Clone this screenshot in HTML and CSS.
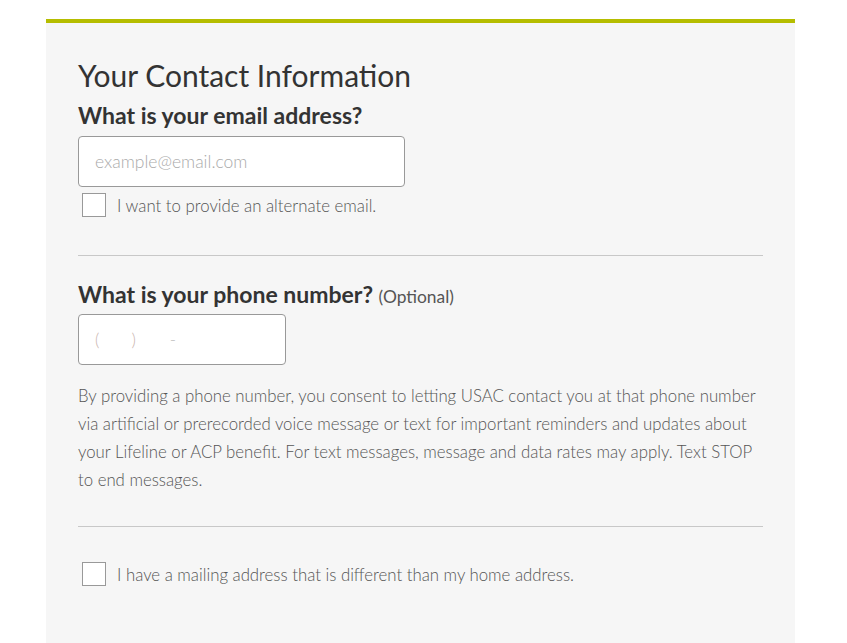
FILE: index.html
```html
<!DOCTYPE html>
<html lang="en">
<head>
    <meta charset="UTF-8">
    <meta name="viewport" content="width=device-width, initial-scale=1.0">
    <title>Your Contact Information</title>
    <link rel="stylesheet" href="styles.css">
</head>
<body>
    <div class="card">
        <h1>Your Contact Information</h1>

        <section class="field email-field">
            <label class="question" for="email">What is your email address?</label>
            <input type="text" id="email" class="text-input email-input" placeholder="example@email.com">
            <label class="check">
                <span class="box"></span>
                <span class="check-label">I want to provide an alternate email.</span>
            </label>
        </section>

        <hr class="divider">

        <section class="field phone-field">
            <label class="question" for="phone">What is your phone number? <span class="optional">(Optional)</span></label>
            <div class="text-input phone-input">
                <span class="mask">(</span>
                <span class="mask gap">)</span>
                <span class="mask dash">-</span>
            </div>
            <p class="consent">By providing a phone number, you consent to letting USAC contact you at that phone number via artificial or prerecorded voice message or text for important reminders and updates about your Lifeline or ACP benefit. For text messages, message and data rates may apply. Text STOP to end messages.</p>
        </section>

        <hr class="divider">

        <label class="check mailing">
            <span class="box"></span>
            <span class="check-label">I have a mailing address that is different than my home address.</span>
        </label>
    </div>
</body>
</html>
```

FILE: styles.css
```css
body {
    margin: 0;
    padding: 0;
    background: #fff;
    font-family: 'Lato', sans-serif;
    color: #333;
}

.card {
    width: 685px;
    margin: 19px 0 0 46px;
    padding: 33px 32px 50px;
    min-height: 550px;
    background: #f6f6f6;
    border-top: 4px solid #b5bd00;
}

h1 {
    margin: 0;
    font-size: 30px;
    font-weight: 400;
    line-height: 38px;
    color: #333;
}

.field {
    margin: 0;
}

.email-field {
    margin-top: 6px;
    margin-bottom: 38px;
}

.phone-field {
    margin: 23px 0 32px;
}

.question {
    display: block;
    font-size: 23px;
    font-weight: 700;
    line-height: 30px;
    color: #333;
}

.optional {
    font-size: 17.4px;
    font-weight: 400;
    line-height: 1;
    color: #555;
}

.text-input {
    box-sizing: border-box;
    height: 51px;
    padding: 0 16px;
    border: 1px solid #999;
    border-radius: 4px;
    background: #fff;
    font-family: 'Lato', sans-serif;
    font-size: 17.5px;
    font-weight: 300;
    color: #333;
    outline: none;
}

.text-input::placeholder {
    color: #aaa;
}

.email-input {
    display: block;
    width: 327px;
    margin-top: 6px;
}

.phone-input {
    display: flex;
    align-items: center;
    width: 208px;
    margin-top: 5px;
}

.mask {
    color: #c9b4ad;
    font-size: 17px;
}

.gap {
    margin-left: 32px;
}

.dash {
    margin-left: 34px;
    color: #bbb;
}

.check {
    display: flex;
    align-items: center;
    gap: 11px;
    margin: 6px 0 0 4px;
}

.box {
    box-sizing: border-box;
    flex: none;
    width: 24px;
    height: 24px;
    border: 1px solid #999;
    background: #fff;
}

.check-label {
    font-size: 16.8px;
    font-weight: 300;
    color: #555;
}

.divider {
    margin: 0;
    border: none;
    border-top: 1px solid #c8c8c8;
}

.consent {
    margin: 17px 0 0;
    font-size: 16.8px;
    font-weight: 300;
    line-height: 28px;
    color: #555;
}

.mailing {
    margin-top: 35px;
}
```
